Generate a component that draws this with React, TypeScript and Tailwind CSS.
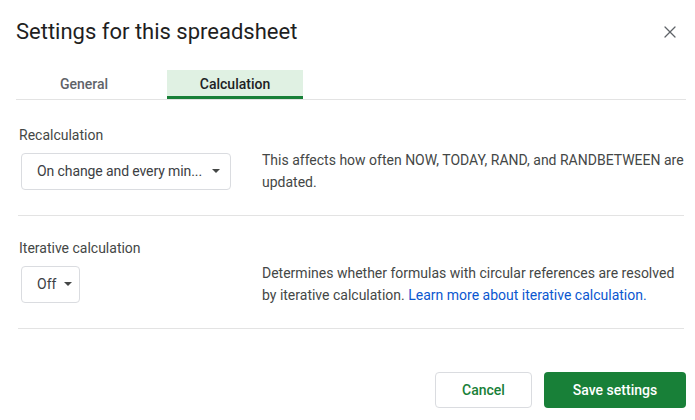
import { X } from "lucide-react"

function Caret() {
  return (
    <svg width="8" height="4" viewBox="0 0 8 4" className="shrink-0">
      <path d="M0 0h8L4 4z" fill="#444746" />
    </svg>
  )
}

function Select({ label, className }: { label: string; className: string }) {
  return (
    <button
      className={`flex h-[37px] items-center justify-between rounded border border-[#dadce0] bg-white pl-[15px] text-[14px] text-[#3c4043] ${className}`}
    >
      <span className="whitespace-nowrap">{label}</span>
      <Caret />
    </button>
  )
}

export default function App() {
  return (
    <div
      className="h-[420px] w-[695px] bg-white pl-4 pr-[9px]"
      style={{ fontFamily: "Roboto, 'Liberation Sans', sans-serif" }}
    >
      {/* Header */}
      <div className="flex items-center justify-between pt-[17px]">
        <h1 className="text-[22px] leading-[30px] text-[#1f1f1f]">Settings for this spreadsheet</h1>
        <button className="mr-[6px] text-[#5f6368]">
          <X className="h-[20px] w-[20px]" strokeWidth={1.5} />
        </button>
      </div>

      {/* Tabs */}
      <div className="mt-[23px] flex border-b border-[#e3e3e3]">
        <div className="flex h-[29px] w-[136px] items-center justify-center text-[14px] font-medium text-[#5f6368]">
          General
        </div>
        <div className="ml-[15px] flex h-[29px] w-[136px] items-center justify-center border-b-[3px] border-[#188038] bg-[#e0f1e3] pt-[3px] text-[14px] font-medium text-[#202124]">
          Calculation
        </div>
      </div>

      {/* Recalculation */}
      <div className="mx-[2px] border-b border-[#e3e3e3] pb-[22px] pt-[25px]">
        <div className="pl-[1px] text-[14px] leading-5 text-[#444746]">Recalculation</div>
        <div className="mt-[4px] flex items-center">
          <div className="w-[244px] shrink-0 pl-[3px]">
            <Select label="On change and every min..." className="w-[210px] pr-[10px] tracking-[-0.1px]" />
          </div>
          <p className="text-[14px] leading-[22px] text-[#444746]">
            This affects how often NOW, TODAY, RAND, and RANDBETWEEN are updated.
          </p>
        </div>
      </div>

      {/* Iterative calculation */}
      <div className="mx-[2px] border-b border-[#e3e3e3] pb-[22px] pt-[22px]">
        <div className="pl-[1px] text-[14px] leading-5 text-[#444746]">Iterative calculation</div>
        <div className="mt-[4px] flex items-center">
          <div className="w-[244px] shrink-0 pl-[3px]">
            <Select label="Off" className="w-[59px] pr-[7px]" />
          </div>
          <p className="text-[14px] leading-[22px] text-[#444746]">
            Determines whether formulas with circular references are resolved by iterative calculation.{" "}
            <a href="#" className="text-[#0b57d0]">
              Learn more about iterative calculation.
            </a>
          </p>
        </div>
      </div>

      {/* Footer */}
      <div className="mt-[43px] flex justify-end gap-3">
        <button className="h-[36px] w-[97px] rounded border border-[#dadce0] text-[14px] font-medium text-[#188038]">
          Cancel
        </button>
        <button className="h-[36px] w-[142px] rounded bg-[#188038] text-[14px] font-medium text-white">
          Save settings
        </button>
      </div>
    </div>
  )
}
